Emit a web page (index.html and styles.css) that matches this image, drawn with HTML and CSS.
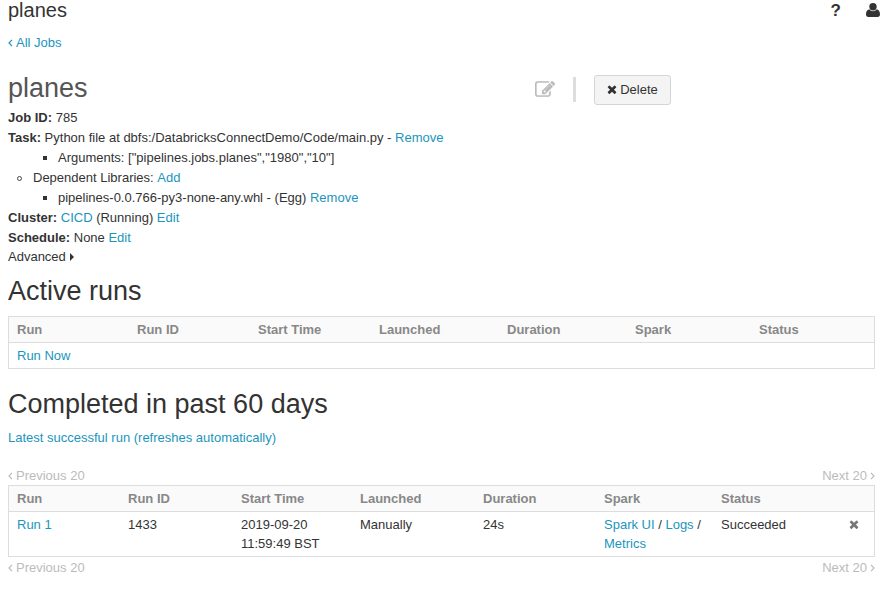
FILE: index.html
```html
<!DOCTYPE html>
<html lang="en">
<head>
<meta charset="utf-8">
<title>planes</title>
<link rel="stylesheet" href="styles.css">
</head>
<body>
<svg class="defs" aria-hidden="true">
  <symbol id="times" viewBox="302 302 1188 1252"><path d="M1490 1322q0 40-28 68l-136 136q-28 28-68 28t-68-28l-294-294-294 294q-28 28-68 28t-68-28l-136-136q-28-28-28-68t28-68l294-294-294-294q-28-28-28-68t28-68l136-136q28-28 68-28t68 28l294 294 294-294q28-28 68-28t68 28l136 136q28 28 28 68t-28 68l-294 294 294 294q28 28 28 68z"/></symbol>
  <symbol id="left" viewBox="0 0 5 8"><path d="M4 .8L1 4l3 3.2" fill="none" stroke="currentColor" stroke-width="1.2"/></symbol>
  <symbol id="right" viewBox="0 0 5 8"><path d="M1 .8L4 4 1 7.2" fill="none" stroke="currentColor" stroke-width="1.2"/></symbol>
</svg>
<header class="topbar">
  <span class="crumb">planes</span>
  <span class="help">?</span>
  <svg class="user" viewBox="0 0 14 14"><circle cx="7" cy="3.7" r="3.7"/><path d="M3.2 6.3C1 6.8 0 8.7 0 11.6 0 13.2.9 14 2.3 14h9.4c1.4 0 2.3-.8 2.3-2.4 0-2.9-1-4.8-3.2-5.3C9.8 7.6 8.500 8.200 7 8.200S4.200 7.600 3.200 6.300z"/></svg>
</header>
<nav class="back"><a><svg class="chev"><use href="#left"/></svg>All Jobs</a></nav>
<section class="title">
  <h1>planes</h1>
  <svg class="edit" viewBox="0 128 1792 1408"><path d="M888 1184l116-116-152-152-116 116v56h96v96h56zm440-720q-16-16-33 1l-350 350q-17 17-1 33t33-1l350-350q17-17 1-33zm80 594v190q0 119-84.500 203.500t-203.500 84.500h-832q-119 0-203.500-84.500t-84.500-203.500v-832q0-119 84.500-203.500t203.500-84.500h832q63 0 117 25 15 7 18 23 3 17-9 29l-49 49q-14 14-32 8-23-6-45-6h-832q-66 0-113 47t-47 113v832q0 66 47 113t113 47h832q66 0 113-47t47-113v-126q0-13 9-22l64-64q15-15 35-7t20 29zm-96-738l288 288-672 672h-288v-288zm444 132l-92 92-288-288 92-92q28-28 68-28t68 28l152 152q28 28 28 68t-28 68z"/></svg>
  <span class="divider"></span>
  <button class="delete"><svg class="times"><use href="#times"/></svg>Delete</button>
</section>
<section class="details">
  <div><b>Job ID:</b> 785</div>
  <div><b>Task:</b> Python file at dbfs:/DatabricksConnectDemo/Code/main.py - <a>Remove</a></div>
  <div class="item deep"><i class="square"></i>Arguments: ["pipelines.jobs.planes","1980","10"]</div>
  <div class="item"><i class="ring"></i>Dependent Libraries: <a>Add</a></div>
  <div class="item deep"><i class="square"></i>pipelines-0.0.766-py3-none-any.whl - (Egg) <a>Remove</a></div>
  <div><b>Cluster:</b> <a>CICD</a> (Running) <a>Edit</a></div>
  <div><b>Schedule:</b> None <a>Edit</a></div>
  <div class="advanced">Advanced<i class="caret"></i></div>
</section>
<h2>Active runs</h2>
<table class="active">
  <colgroup><col class="a1"><col class="a2"><col class="a3"><col class="a4"><col class="a5"><col class="a6"><col></colgroup>
  <thead><tr><th>Run</th><th>Run ID</th><th>Start Time</th><th>Launched</th><th>Duration</th><th>Spark</th><th>Status</th></tr></thead>
  <tbody><tr><td colspan="7"><a>Run Now</a></td></tr></tbody>
</table>
<h2 class="completed">Completed in past 60 days</h2>
<p class="latest"><a>Latest successful run (refreshes automatically)</a></p>
<div class="pager"><span><svg class="chev"><use href="#left"/></svg>Previous 20</span><span>Next 20<svg class="chev next"><use href="#right"/></svg></span></div>
<table>
  <colgroup><col class="c1"><col class="c2"><col class="c3"><col class="c4"><col class="c5"><col class="c6"><col class="c7"><col></colgroup>
  <thead><tr><th>Run</th><th>Run ID</th><th>Start Time</th><th>Launched</th><th>Duration</th><th>Spark</th><th>Status</th><th></th></tr></thead>
  <tbody><tr><td><a>Run 1</a></td><td>1433</td><td>2019-09-20<br>11:59:49 BST</td><td>Manually</td><td>24s</td><td><a>Spark UI</a> / <a>Logs</a> /<br><a>Metrics</a></td><td>Succeeded</td><td><svg class="times remove"><use href="#times"/></svg></td></tr></tbody>
</table>
<div class="pager bottom"><span><svg class="chev"><use href="#left"/></svg>Previous 20</span><span>Next 20<svg class="chev next"><use href="#right"/></svg></span></div>
</body>
</html>
```
FILE: styles.css
```css
* { box-sizing: border-box; }
body {
  margin: 0;
  padding: 0 10px 0 8px;
  height: 598px;
  overflow: hidden;
  background: #fff;
  color: #333;
  font: 13px/20px "Liberation Sans", Arial, sans-serif;
}
a { color: #1b95bd; }
svg { fill: currentColor; }
.defs { position: absolute; width: 0; height: 0; }
.topbar { display: flex; height: 33px; margin-right: -5px; }
.crumb { flex: 1; font-size: 20px; line-height: 20px; }
.help { font-size: 17px; font-weight: bold; line-height: 22px; margin-right: 25px; }
.user { width: 14px; height: 14px; margin-top: 3px; }
.chev { width: 5px; height: 8px; margin-right: 3px; }
.chev.next { margin: 0 0 0 3px; }
.title { display: flex; height: 33px; margin-top: 22px; }
h1 { width: 527px; margin: 0; font-size: 27px; font-weight: normal; line-height: 26px; color: #555; }
.edit { width: 20px; height: 16px; margin-top: 6px; color: #bbb; stroke: currentColor; stroke-width: 40px; }
.divider { width: 3px; height: 25px; margin: 2px 18px 0; background: #ddd; }
.delete {
  width: 77px;
  height: 30px;
  padding: 0;
  border: 1px solid #d5d5d5;
  border-radius: 3px;
  background: #f4f4f4;
  color: #333;
  font: inherit;
}
.times { width: 10px; height: 9px; margin-right: 3px; }
.details { height: 159px; }
.item { display: flex; align-items: center; white-space: pre; padding-left: 9px; }
.deep { padding-left: 35px; }
.square { width: 4px; height: 4px; margin-right: 11px; background: #333; }
.ring { width: 5px; height: 5px; margin-right: 11px; border: 1px solid #444; border-radius: 50%; }
.advanced { line-height: 18px; }
.caret { display: inline-block; margin-left: 4px; border: solid transparent; border-width: 4px 0 4px 4px; border-left-color: #333; }
h2 { margin: 0; height: 49px; font-size: 27px; font-weight: normal; line-height: 48px; }
table { width: 867px; border: 1px solid #ddd; border-collapse: separate; border-spacing: 0; table-layout: fixed; }
th, td { padding: 3px 0 3px 8px; text-align: left; vertical-align: top; line-height: 19px; }
th { height: 26px; border-bottom: 1px solid #ddd; background: #fafafa; color: #888; }
.a1 { width: 120px; }
.a2, .a3 { width: 121px; }
.a4, .a5 { width: 128px; }
.a6 { width: 124px; }
.c1 { width: 111px; }
.c2 { width: 113px; }
.c3 { width: 119px; }
.c4 { width: 123px; }
.c5 { width: 121px; }
.c6 { width: 117px; }
.c7 { width: 128px; }
.completed { margin-top: 11px; height: 48px; }
.latest { margin: 0 0 18px; }
.pager { display: flex; justify-content: space-between; height: 19px; color: #bbb; }
.bottom { height: 22px; line-height: 22px; }
.remove { color: #777; margin: 0; }
```
